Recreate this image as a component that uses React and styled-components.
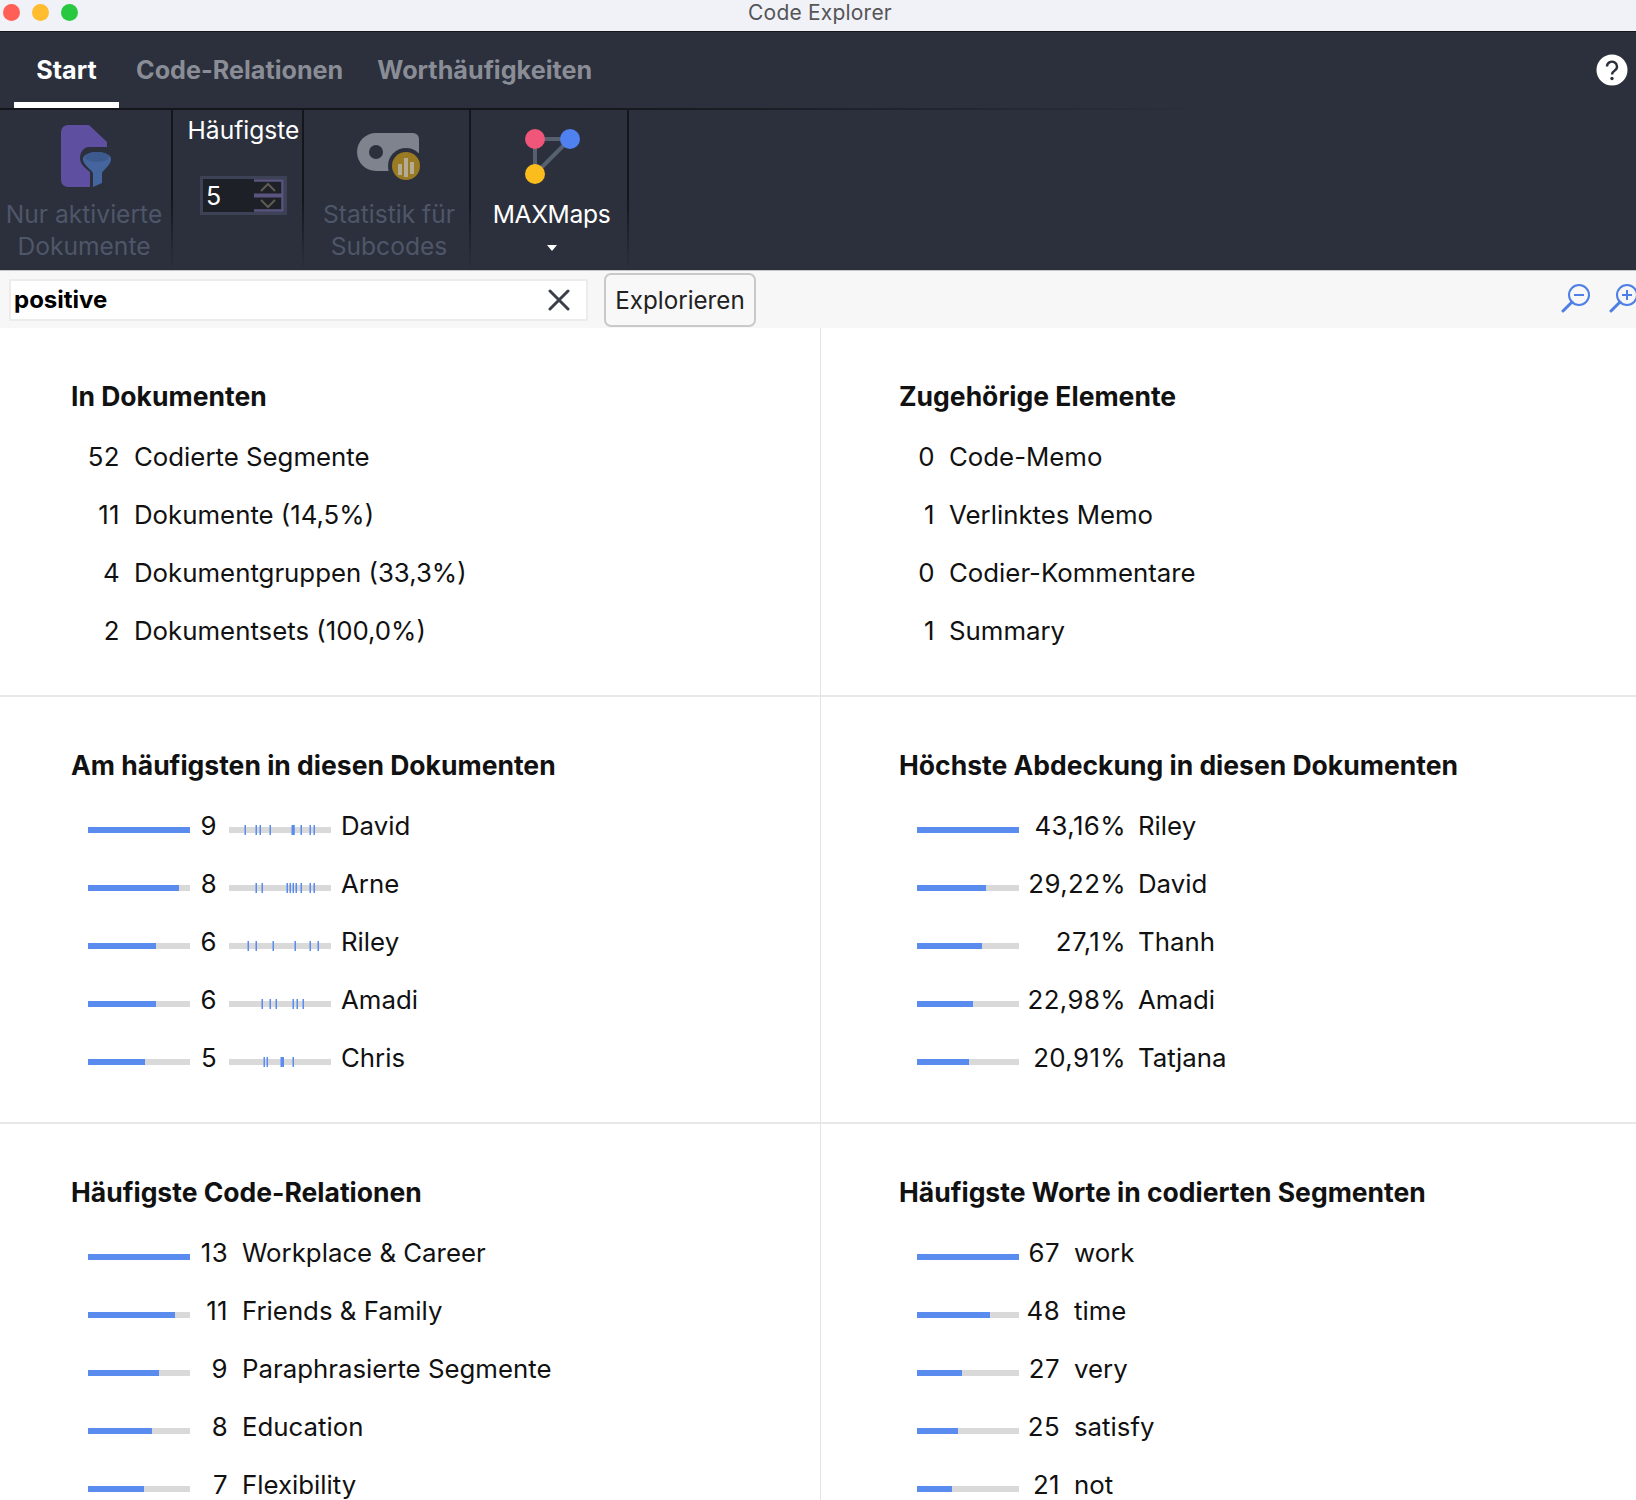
import styled, { createGlobalStyle } from 'styled-components'

const GlobalStyle = createGlobalStyle`
  html, body {
    margin: 0;
    padding: 0;
    background: #ffffff;
  }
  body {
    font-family: Inter, "Liberation Sans", sans-serif;
    color: #111111;
  }
`

const Page = styled.div`
  width: 1636px;
  height: 1500px;
  overflow: hidden;
  display: flex;
  flex-direction: column;
`

const TitleBar = styled.div`
  position: relative;
  box-sizing: content-box;
  flex: none;
  height: 24px;
  padding: 0 0 7px 4px;
  background: #f1f2f7;
  border-bottom: 1px solid #14161b;
  display: flex;
  align-items: center;
  justify-content: center;
  font-size: 21px;
  letter-spacing: 0.2px;
  color: #555558;
`

const Lights = styled.div`
  position: absolute;
  left: 3px;
  top: 4px;
  display: flex;
  gap: 12px;
`

const Light = styled.span`
  width: 17px;
  height: 17px;
  border-radius: 50%;
  background: ${(props) => props.color};
`

const TabBar = styled.div`
  flex: none;
  height: 76px;
  background: #2b303c;
  display: flex;
  align-items: flex-end;
  justify-content: space-between;
  padding: 0 8px 0 14px;
`

const Tabs = styled.div`
  display: flex;
  height: 100%;
`

const Tab = styled.div`
  box-sizing: border-box;
  height: 100%;
  padding: 6px 17px 0;
  display: flex;
  align-items: center;
  justify-content: center;
  width: ${(props) => (props.active ? '105px' : 'auto')};
  font-size: 25.2px;
  font-weight: 700;
  color: ${(props) => (props.active ? '#ffffff' : '#8a8d96')};
  border-bottom: 6px solid ${(props) => (props.active ? '#ffffff' : 'transparent')};
`

const HelpButton = styled.svg`
  align-self: center;
`

const Ribbon = styled.div`
  flex: none;
  height: 162px;
  background: #2b303c;
  display: flex;
  position: relative;
  border-bottom: 1px solid #c4c5c8;
  &::before {
    content: '';
    position: absolute;
    left: 0;
    top: 0;
    width: 1215px;
    height: 2px;
    background: linear-gradient(to right, #14161b 0%, #14161b 45%, #2b303c 100%);
  }
`

const RibbonGroup = styled.div`
  box-sizing: border-box;
  width: ${(props) => props.width}px;
  height: 100%;
  padding: ${(props) => props.top || 0}px 0 0 ${(props) => props.shift || 0}px;
  display: flex;
  flex-direction: column;
  align-items: center;
  border-right: 2px solid;
  border-image: linear-gradient(to bottom, #14161b 0%, #14161b 55%, #2b303c 100%) 1;
`

const IconSlot = styled.div`
  box-sizing: border-box;
  height: 90px;
  flex: none;
  padding-top: ${(props) => props.top}px;
  display: flex;
  justify-content: center;
  align-items: flex-start;
`

const GroupLabel = styled.div`
  font-size: 24.6px;
  line-height: 32px;
  padding-right: ${(props) => props.nudge || 0}px;
  letter-spacing: ${(props) => props.tracking || 0}px;
  text-align: center;
  white-space: nowrap;
  color: ${(props) => (props.disabled ? '#505669' : '#ffffff')};
`

const Caret = styled.div`
  width: 0;
  height: 0;
  margin-top: 15px;
  border-left: 5px solid transparent;
  border-right: 5px solid transparent;
  border-top: 6px solid #ffffff;
`

const Spinner = styled.div`
  box-sizing: border-box;
  width: 87px;
  height: 39px;
  margin-top: 30px;
  background: #1e2027;
  border: 3px solid #3d4256;
  display: flex;
  align-items: center;
  justify-content: space-between;
  color: #ffffff;
  font-size: 25px;
  padding-left: 3px;
`

const SearchBar = styled.div`
  flex: none;
  height: 57px;
  background: #f7f7f7;
  display: flex;
  align-items: center;
  padding-left: 9px;
  position: relative;
`

const SearchField = styled.div`
  box-sizing: border-box;
  width: 579px;
  height: 42px;
  background: #ffffff;
  border: 2px solid #ececec;
  display: flex;
  align-items: center;
  justify-content: space-between;
  padding: 0 16px 0 3px;
  font-size: 24px;
  font-weight: 700;
  color: #000000;
`

const ExploreButton = styled.div`
  box-sizing: border-box;
  width: 152px;
  height: 54px;
  margin-left: 16px;
  padding-top: 1px;
  background: #f8f8f8;
  border: 2px solid #c9c9c9;
  border-radius: 7px;
  display: flex;
  align-items: center;
  justify-content: center;
  font-size: 24.2px;
  color: #222222;
`

const ZoomIcons = styled.div`
  position: absolute;
  right: -3px;
  top: 12px;
  display: flex;
  gap: 18px;
`

const Board = styled.div`
  flex: 1;
  display: grid;
  grid-template-columns: 821px 1fr;
  grid-template-rows: 369px 427px 1fr;
  min-height: 0;
`

const Section = styled.section`
  box-sizing: border-box;
  padding: 52px 0 0 ${(props) => props.left}px;
  border-right: ${(props) => (props.right ? 'none' : '1px solid #e4e4e4')};
  border-bottom: ${(props) => (props.last ? 'none' : '2px solid #e8e8e8')};
  overflow: hidden;
`

const Heading = styled.h2`
  margin: 0 0 15px;
  font-size: 26.5px;
  line-height: 32px;
  font-weight: 700;
  color: #111111;
  white-space: nowrap;
`

const Row = styled.div`
  height: 58px;
  display: flex;
  align-items: center;
  padding-left: ${(props) => props.indent}px;
  font-size: 25.8px;
  white-space: nowrap;
`

const Count = styled.span`
  flex: none;
  width: ${(props) => props.width}px;
  text-align: right;
  letter-spacing: 0.4px;
`

const Label = styled.span`
  margin-left: ${(props) => props.gap}px;
`

const Track = styled.div`
  flex: none;
  width: 102px;
  height: 6px;
  margin-top: 9px;
  background: #d9d9d9;
`

const Fill = styled.div`
  height: 100%;
  background: #5a8bef;
`

const Ticks = styled.svg`
  flex: none;
  display: block;
  margin: 9px 0 0 12px;
`

const docRows = [
  ['52', 'Codierte Segmente'],
  ['11', 'Dokumente (14,5%)'],
  ['4', 'Dokumentgruppen (33,3%)'],
  ['2', 'Dokumentsets (100,0%)'],
]

const linkedRows = [
  ['0', 'Code-Memo'],
  ['1', 'Verlinktes Memo'],
  ['0', 'Codier-Kommentare'],
  ['1', 'Summary'],
]

const frequentRows = [
  { count: 9, name: 'David', ticks: [[16, 1.5], [27, 1.5], [31, 1.5], [41, 1.5], [63, 3.3], [72, 1.5], [81, 1.5], [85, 1.5]] },
  { count: 8, name: 'Arne', ticks: [[27, 1.5], [33, 1.5], [58, 1.5], [61, 1.5], [64, 1.5], [67, 1.5], [72, 1.5], [81, 1.5], [85, 1.5]] },
  { count: 6, name: 'Riley', ticks: [[19, 1.5], [27, 1.5], [44, 1.5], [66, 1.5], [81, 1.5], [89, 1.5]] },
  { count: 6, name: 'Amadi', ticks: [[33, 1.5], [41, 1.5], [47, 1.5], [64, 1.5], [68, 1.5], [74, 1.5]] },
  { count: 5, name: 'Chris', ticks: [[35, 1.5], [38, 1.5], [52, 3.5], [64, 1.5]] },
]

const coverageRows = [
  ['43,16%', 'Riley', 100],
  ['29,22%', 'David', 68],
  ['27,1%', 'Thanh', 64],
  ['22,98%', 'Amadi', 54.5],
  ['20,91%', 'Tatjana', 51],
]

const relationRows = [
  [13, 'Workplace & Career', 100],
  [11, 'Friends & Family', 85],
  [9, 'Paraphrasierte Segmente', 70],
  [8, 'Education', 62.5],
  [7, 'Flexibility', 55],
]

const wordRows = [
  [67, 'work', 100],
  [48, 'time', 72],
  [27, 'very', 44],
  [25, 'satisfy', 40],
  [21, 'not', 34],
]

const Bar = ({ percent }) => (
  <Track>
    <Fill style={{ width: `${percent}%` }} />
  </Track>
)

const TickBar = ({ ticks }) => (
  <Ticks width="102" height="10" viewBox="0 0 102 10">
    <rect y="2" width="102" height="6" fill="#d9d9d9" />
    {ticks.map(([x, w]) => (
      <rect key={x} x={x - 0.5} y="0" width={w} height="10" fill="#5a8bef" />
    ))}
  </Ticks>
)

const DocFilterIcon = () => (
  <svg width="50" height="62" viewBox="0 0 50 62">
    <path d="M7 0H28L46 17V62H7a7 7 0 0 1-7-7V7a7 7 0 0 1 7-7z" fill="#5f4fa0" />
    <path d="M50 22H28C22 22 19 28 19 33C19 39 24 43 29 47V62H50Z" fill="#2b303c" />
    <path d="M22 34a14 7 0 0 1 28 0c0 6-7 10-9 14V58L32 62V48c-2-4-10-8-10-14z" fill="#44659e" />
    <ellipse cx="36" cy="32" rx="12" ry="5" fill="#3d5a8e" />
  </svg>
)

const TagStatsIcon = () => (
  <svg width="64" height="48" viewBox="0 0 64 48">
    <path d="M19 0H56a6 6 0 0 1 6 6V38H19A19 19 0 0 1 19 0z" fill="#7e838e" />
    <circle cx="19" cy="19" r="7" fill="#2b303c" />
    <circle cx="49" cy="33" r="18" fill="#2b303c" />
    <circle cx="49" cy="33" r="14" fill="#9a7a22" />
    <rect x="41" y="31" width="4" height="11" fill="#b3ab94" />
    <rect x="47" y="25" width="4" height="19" fill="#b3ab94" />
    <rect x="53" y="29" width="4" height="12" fill="#b3ab94" />
  </svg>
)

const MapsIcon = () => (
  <svg width="60" height="60" viewBox="0 0 60 60">
    <path d="M13 12H48M13 12V47M48 12L13 47" stroke="#56606e" strokeWidth="4" fill="none" />
    <circle cx="13" cy="12" r="10" fill="#f0567a" />
    <circle cx="48" cy="12" r="10" fill="#4f82f0" />
    <circle cx="13" cy="47" r="10" fill="#fbbd1e" />
  </svg>
)

const SpinnerArrows = () => (
  <svg width="30" height="33" viewBox="0 0 30 33">
    <path d="M0 1.5H28.5V31.5H0" stroke="#5a5480" strokeWidth="2.5" fill="none" />
    <path d="M0 16.5H28" stroke="#5a5480" strokeWidth="4" />
    <path d="M7 12l7-7 7 7M7 21l7 7 7-7" stroke="#5e5c52" strokeWidth="2" fill="none" />
  </svg>
)

const ZoomIcon = ({ plus }) => (
  <svg width="30" height="30" viewBox="0 0 30 30">
    <circle cx="18" cy="12" r="10" stroke="#4d7fe6" strokeWidth="2" fill="none" />
    <path d="M11 19L2 28" stroke="#4d7fe6" strokeWidth="3" strokeLinecap="round" />
    <path d={plus ? 'M13 12h10M18 7v10' : 'M13 12h10'} stroke="#4d7fe6" strokeWidth="2" />
  </svg>
)

export default function App() {
  return (
    <Page>
      <GlobalStyle />
      <TitleBar>
        <Lights>
          <Light color="#ff5f57" />
          <Light color="#febc2e" />
          <Light color="#28c840" />
        </Lights>
        Code Explorer
      </TitleBar>

      <TabBar>
        <Tabs>
          <Tab active>Start</Tab>
          <Tab>Code-Relationen</Tab>
          <Tab>Worthäufigkeiten</Tab>
        </Tabs>
        <HelpButton width="32" height="32" viewBox="0 0 32 32">
          <circle cx="16" cy="16" r="15.5" fill="#ffffff" />
          <path d="M11 12.5a5 4.8 0 1 1 8 3.8c-2 1.4-3 2-3 4.2" stroke="#2b303c" strokeWidth="2.4" fill="none" />
          <circle cx="16" cy="24.5" r="1.7" fill="#2b303c" />
        </HelpButton>
      </TabBar>

      <Ribbon>
        <RibbonGroup width={173}>
          <IconSlot top={17}><DocFilterIcon /></IconSlot>
          <GroupLabel disabled nudge={3}>Nur aktivierte<br />Dokumente</GroupLabel>
        </RibbonGroup>
        <RibbonGroup width={131} shift={12} top={6}>
          <GroupLabel>Häufigste</GroupLabel>
          <Spinner>
            5
            <SpinnerArrows />
          </Spinner>
        </RibbonGroup>
        <RibbonGroup width={167} shift={5}>
          <IconSlot top={25}><TagStatsIcon /></IconSlot>
          <GroupLabel disabled>Statistik für<br />Subcodes</GroupLabel>
        </RibbonGroup>
        <RibbonGroup width={158} shift={5}>
          <IconSlot top={19}><MapsIcon /></IconSlot>
          <GroupLabel tracking={-0.35}>MAXMaps</GroupLabel>
          <Caret />
        </RibbonGroup>
      </Ribbon>

      <SearchBar>
        <SearchField>
          positive
          <svg width="22" height="22" viewBox="0 0 22 22">
            <path d="M2 2l18 18M20 2L2 20" stroke="#3b3f4a" strokeWidth="3" strokeLinecap="round" />
          </svg>
        </SearchField>
        <ExploreButton>Explorieren</ExploreButton>
        <ZoomIcons>
          <ZoomIcon />
          <ZoomIcon plus />
        </ZoomIcons>
      </SearchBar>

      <Board>
        <Section left={71}>
          <Heading>In Dokumenten</Heading>
          {docRows.map(([count, name]) => (
            <Row key={name} indent={0}>
              <Count width={49}>{count}</Count>
              <Label gap={14}>{name}</Label>
            </Row>
          ))}
        </Section>
        <Section left={78} right>
          <Heading>Zugehörige Elemente</Heading>
          {linkedRows.map(([count, name]) => (
            <Row key={name} indent={0}>
              <Count width={36}>{count}</Count>
              <Label gap={14}>{name}</Label>
            </Row>
          ))}
        </Section>

        <Section left={71}>
          <Heading>Am häufigsten in diesen Dokumenten</Heading>
          {frequentRows.map((row) => (
            <Row key={row.name} indent={17}>
              <Bar percent={(row.count / 9) * 100} />
              <Count width={27}>{row.count}</Count>
              <TickBar ticks={row.ticks} />
              <Label gap={10}>{row.name}</Label>
            </Row>
          ))}
        </Section>
        <Section left={78} right>
          <Heading>Höchste Abdeckung in diesen Dokumenten</Heading>
          {coverageRows.map(([value, name, percent]) => (
            <Row key={name} indent={18}>
              <Bar percent={percent} />
              <Count width={107}>{value}</Count>
              <Label gap={12}>{name}</Label>
            </Row>
          ))}
        </Section>

        <Section left={71} last>
          <Heading>Häufigste Code-Relationen</Heading>
          {relationRows.map(([count, name, percent]) => (
            <Row key={name} indent={17}>
              <Bar percent={percent} />
              <Count width={38}>{count}</Count>
              <Label gap={14}>{name}</Label>
            </Row>
          ))}
        </Section>
        <Section left={78} right last>
          <Heading>Häufigste Worte in codierten Segmenten</Heading>
          {wordRows.map(([count, name, percent]) => (
            <Row key={name} indent={18}>
              <Bar percent={percent} />
              <Count width={41}>{count}</Count>
              <Label gap={14}>{name}</Label>
            </Row>
          ))}
        </Section>
      </Board>
    </Page>
  )
}
